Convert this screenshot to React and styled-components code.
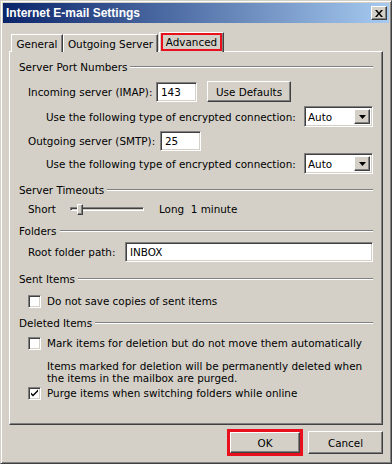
import React from "react";
import styled, { createGlobalStyle } from "styled-components";

const GlobalStyle = createGlobalStyle`
  html, body {
    margin: 0;
    padding: 0;
    background: #d4d0c8;
  }
  body {
    font-family: "DejaVu Sans", Verdana, sans-serif;
    font-size: 10.4px;
    color: #000;
  }
`;

// Windows classic 3D edges
const sunken = `
  border: 1px solid;
  border-color: #808080 #ffffff #ffffff #808080;
  box-shadow: inset 1px 1px #404040, inset -1px -1px #d4d0c8;
`;

const raised = `
  border: 1px solid;
  border-color: #ffffff #404040 #404040 #ffffff;
  box-shadow: inset -1px -1px #808080;
`;

export default function App() {
  return (
    <>
      <GlobalStyle />
      <Window>
        <TitleBar>
          <Title>Internet E-mail Settings</Title>
          <CloseButton>
            <svg width="8" height="7" viewBox="0 0 8 7">
              <path d="M0 0h2l2 2.5L6 0h2L5 3.5 8 7H6L4 4.5 2 7H0l3-3.5z" fill="#000" />
            </svg>
          </CloseButton>
        </TitleBar>

        <Body>
          <Tabs>
            <Tab width={52}>General</Tab>
            <Tab width={95}>Outgoing Server</Tab>
            <Tab width={65} active>
              <Highlight>Advanced</Highlight>
            </Tab>
          </Tabs>

          <Panel>
            <GroupHeader mt={8}>
              <span>Server Port Numbers</span>
            </GroupHeader>
            <Row mt={7}>
              <Label width={128}>Incoming server (IMAP):</Label>
              <TextBox width={41}>143</TextBox>
              <PushButton width={84} ml={10}>Use Defaults</PushButton>
            </Row>
            <Row mt={4} indent={27} justify="space-between">
              <span>Use the following type of encrypted connection:</span>
              <Dropdown />
            </Row>
            <Row mt={3}>
              <Label width={132}>Outgoing server (SMTP):</Label>
              <TextBox width={41}>25</TextBox>
            </Row>
            <Row mt={2} indent={27} justify="space-between">
              <span>Use the following type of encrypted connection:</span>
              <Dropdown />
            </Row>

            <GroupHeader mt={9}>
              <span>Server Timeouts</span>
            </GroupHeader>
            <Row mt={5} height={14}>
              <Label width={42}>Short</Label>
              <Slider>
                <Track />
                <Thumb />
              </Slider>
              <span>Long&nbsp;&nbsp;1 minute</span>
            </Row>

            <GroupHeader mt={8}>
              <span>Folders</span>
            </GroupHeader>
            <Row mt={4} height={20}>
              <Label width={97}>Root folder path:</Label>
              <TextBox width={248}>INBOX</TextBox>
            </Row>

            <GroupHeader mt={10}>
              <span>Sent Items</span>
            </GroupHeader>
            <CheckRow mt={8}>
              <Checkbox />
              <span>Do not save copies of sent items</span>
            </CheckRow>

            <GroupHeader mt={8}>
              <span>Deleted Items</span>
            </GroupHeader>
            <CheckRow mt={6}>
              <Checkbox />
              <span>Mark items for deletion but do not move them automatically</span>
            </CheckRow>
            <Note>
              Items marked for deletion will be permanently deleted when
              <br />
              the items in the mailbox are purged.
            </Note>
            <CheckRow mt={2}>
              <Checkbox checked />
              <span>Purge items when switching folders while online</span>
            </CheckRow>
          </Panel>

          <Footer>
            <Highlight thick>
              <PushButton width={70} height={21}>OK</PushButton>
            </Highlight>
            <PushButton width={75} height={23}>Cancel</PushButton>
          </Footer>
        </Body>
      </Window>
    </>
  );
}

const Dropdown = () => (
  <Select>
    <SelectValue>Auto</SelectValue>
    <ArrowButton>
      <svg width="7" height="4" viewBox="0 0 7 4">
        <path d="M0 0h7L3.5 4z" fill="#000" />
      </svg>
    </ArrowButton>
  </Select>
);

const Checkbox = ({ checked }) => (
  <Box>
    {checked && (
      <svg width="9" height="9" viewBox="0 0 9 9">
        <path d="M1 3.5v2l2 2 5-5V0.5l-5 5z" fill="#000" />
      </svg>
    )}
  </Box>
);

const Window = styled.div`
  width: 392px;
  height: 464px;
  box-sizing: border-box;
  background: #d4d0c8;
  border: 1px solid;
  border-color: #d4d0c8 #404040 #404040 #d4d0c8;
  box-shadow: inset 1px 1px #ffffff, inset -1px -1px #808080;
  padding: 2px;
  display: flex;
  flex-direction: column;
`;

const TitleBar = styled.div`
  height: 20px;
  display: flex;
  align-items: center;
  justify-content: space-between;
  padding: 0 2px 0 3px;
  background: linear-gradient(to right, #0a246a, #a6caf0);
`;

const Title = styled.span`
  color: #ffffff;
  font-family: "Liberation Sans", Arial, sans-serif;
  font-weight: bold;
  font-size: 12px;
`;

const CloseButton = styled.div`
  width: 16px;
  height: 14px;
  box-sizing: border-box;
  background: #d4d0c8;
  ${raised}
  display: flex;
  align-items: center;
  justify-content: center;
`;

const Body = styled.div`
  flex: 1;
  display: flex;
  flex-direction: column;
  padding: 8px 6px 0 6px;
`;

const Tabs = styled.div`
  display: flex;
  align-items: flex-end;
  padding-left: 2px;
  height: 20px;
`;

const Tab = styled.div`
  width: ${(p) => p.width}px;
  height: ${(p) => (p.active ? 20 : 18)}px;
  box-sizing: border-box;
  margin: 0 0 -1px ${(p) => (p.active ? 1 : 0)}px;
  padding-bottom: ${(p) => (p.active ? 2 : 0)}px;
  display: flex;
  align-items: center;
  justify-content: center;
  border: 1px solid #ffffff;
  border-bottom: none;
  border-right: 1px solid #404040;
  box-shadow: inset -1px 0 #808080;
  background: #d4d0c8;
  position: relative;
  z-index: ${(p) => (p.active ? 2 : 1)};
`;

const Highlight = styled.div`
  border: ${(p) => (p.thick ? 3 : 2)}px solid #e8101c;
  padding: ${(p) => (p.thick ? "0" : "0 3px")};
  line-height: 14px;
  display: flex;
`;

const Panel = styled.div`
  height: 374px;
  box-sizing: border-box;
  border: 1px solid;
  border-color: #ffffff #404040 #404040 #ffffff;
  box-shadow: inset -1px -1px #808080;
  padding: 0 9px 0 9px;
  display: flex;
  flex-direction: column;
`;

const GroupHeader = styled.div`
  margin-top: ${(p) => p.mt}px;
  height: 14px;
  display: flex;
  align-items: center;
  gap: 3px;
  &::after {
    content: "";
    flex: 1;
    height: 0;
    border-top: 1px solid #808080;
    border-bottom: 1px solid #ffffff;
  }
`;

const Row = styled.div`
  margin-top: ${(p) => p.mt}px;
  padding-left: ${(p) => p.indent || 9}px;
  height: ${(p) => p.height || 21}px;
  display: flex;
  align-items: center;
  justify-content: ${(p) => p.justify || "flex-start"};
`;

const Label = styled.span`
  width: ${(p) => p.width}px;
  flex-shrink: 0;
  white-space: nowrap;
`;

const TextBox = styled.div`
  width: ${(p) => p.width}px;
  height: 20px;
  box-sizing: border-box;
  background: #ffffff;
  ${sunken}
  padding: 0 4px;
  display: flex;
  align-items: center;
`;

const PushButton = styled.div`
  width: ${(p) => p.width}px;
  height: ${(p) => p.height || 21}px;
  margin-left: ${(p) => p.ml || 0}px;
  box-sizing: border-box;
  background: #d4d0c8;
  ${raised}
  display: flex;
  align-items: center;
  justify-content: center;
`;

const Select = styled.div`
  width: 69px;
  height: 21px;
  box-sizing: border-box;
  background: #ffffff;
  ${sunken}
  padding: 2px;
  display: flex;
  align-items: center;
`;

const SelectValue = styled.span`
  flex: 1;
  padding-left: 1px;
`;

const ArrowButton = styled.div`
  width: 16px;
  height: 15px;
  box-sizing: border-box;
  background: #d4d0c8;
  ${raised}
  display: flex;
  align-items: center;
  justify-content: center;
`;

const Slider = styled.div`
  width: 74px;
  height: 14px;
  margin-right: 15px;
  position: relative;
  display: flex;
  align-items: center;
`;

const Track = styled.div`
  width: 100%;
  height: 4px;
  box-sizing: border-box;
  ${sunken}
`;

const Thumb = styled.div`
  position: absolute;
  left: 7px;
  top: 2px;
  width: 4px;
  height: 9px;
  background: #d4d0c8;
  ${raised}
`;

const CheckRow = styled.div`
  margin-top: ${(p) => p.mt}px;
  padding-left: 9px;
  height: 14px;
  display: flex;
  align-items: center;
  gap: 6px;
`;

const Box = styled.div`
  width: 13px;
  height: 13px;
  box-sizing: border-box;
  background: #ffffff;
  ${sunken}
  display: flex;
  align-items: center;
  justify-content: center;
`;

const Note = styled.div`
  margin-top: 11px;
  padding-left: 28px;
  line-height: 11.5px;
`;

const Footer = styled.div`
  display: flex;
  justify-content: flex-end;
  align-items: center;
  gap: 5px;
  padding-top: 4px;
`;
